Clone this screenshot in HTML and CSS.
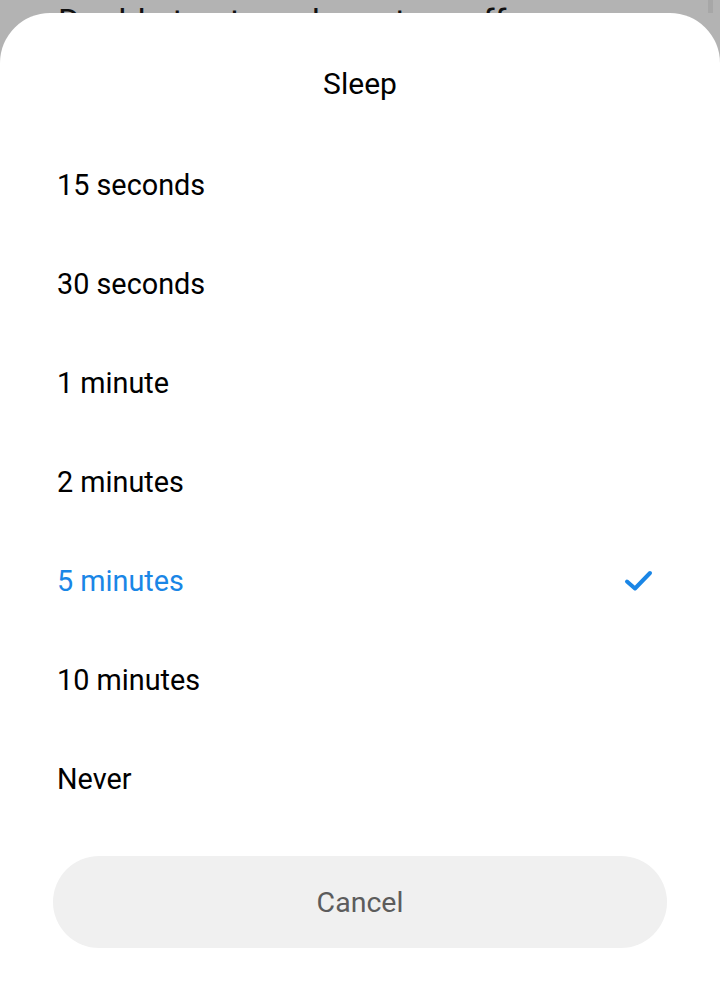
FILE: index.html
```html
<!DOCTYPE html>
<html lang="en">
<head>
<meta charset="utf-8">
<title>Sleep</title>
<link rel="stylesheet" href="styles.css">
</head>
<body>
  <div class="behind">
    <span class="behind-text">Double tap to wake or turn off</span>
    <span class="strip"></span>
  </div>
  <div class="sheet">
    <div class="title">Sleep</div>
    <ul class="options">
      <li class="option">15 seconds</li>
      <li class="option">30 seconds</li>
      <li class="option">1 minute</li>
      <li class="option">2 minutes</li>
      <li class="option selected">5 minutes
        <svg class="check" width="30" height="24" viewBox="0 0 30 24">
          <polyline points="3,12.5 11,19.5 26,4" fill="none" stroke="currentColor" stroke-width="4" stroke-linecap="round" stroke-linejoin="round"/>
        </svg>
      </li>
      <li class="option">10 minutes</li>
      <li class="option">Never</li>
    </ul>
    <div class="actions">
      <button class="cancel">Cancel</button>
    </div>
  </div>
</body>
</html>
```
FILE: styles.css
```css
* { box-sizing: border-box; }
html, body {
  margin: 0;
  padding: 0;
  height: 1002px;
  overflow: hidden;
}
body {
  background: #b3b3b3;
  font-family: Roboto, "Noto Sans", sans-serif;
  color: #000;
  display: flex;
  flex-direction: column;
}
.behind {
  height: 13px;
  overflow: hidden;
  display: flex;
  padding-left: 58px;
  padding-top: 4px;
  flex-shrink: 0;
}
.behind-text {
  font-size: 34px;
  line-height: 34px;
  color: #111;
  white-space: nowrap;
}
.strip {
  margin-left: auto;
  margin-right: 7px;
  width: 5px;
  margin-top: -4px;
  background: #a7a7a7;
}
.sheet {
  flex: 1;
  background: #fff;
  border-radius: 50px 50px 0 0;
  display: flex;
  flex-direction: column;
}
.title {
  font-size: 30px;
  line-height: 40px;
  text-align: center;
  padding-top: 51px;
  margin-bottom: 31px;
}
.options {
  list-style: none;
  margin: 0;
  padding: 0;
}
.option {
  height: 99px;
  display: flex;
  align-items: center;
  padding-left: 57px;
  padding-right: 66px;
  font-size: 28.8px;
}
.option.selected {
  color: #1a86e6;
}
.check {
  margin-left: auto;
  color: #1a86e6;
}
.actions {
  padding: 28px 53px 0;
}
.cancel {
  width: 100%;
  height: 92px;
  border: none;
  border-radius: 46px;
  background: #f0f0f0;
  font-family: Roboto, "Noto Sans", sans-serif;
  font-size: 28.5px;
  color: #5c5c5c;
}
```
